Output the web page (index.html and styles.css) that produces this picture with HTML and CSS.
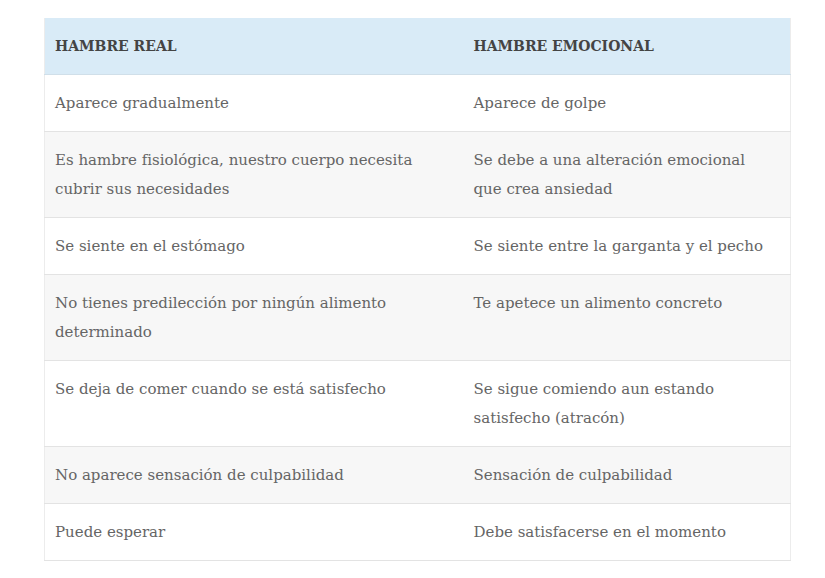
FILE: index.html
```html
<!DOCTYPE html>
<html lang="es">
<head>
<meta charset="utf-8">
<title>Hambre real vs hambre emocional</title>
<link rel="stylesheet" href="styles.css">
</head>
<body>
<table class="compare">
  <colgroup>
    <col class="col-a">
    <col class="col-b">
  </colgroup>
  <thead>
    <tr><th>HAMBRE REAL</th><th>HAMBRE EMOCIONAL</th></tr>
  </thead>
  <tbody>
    <tr><td>Aparece gradualmente</td><td>Aparece de golpe</td></tr>
    <tr><td>Es hambre fisiológica, nuestro cuerpo necesita cubrir sus necesidades</td><td>Se debe a una alteración emocional que crea ansiedad</td></tr>
    <tr><td>Se siente en el estómago</td><td>Se siente entre la garganta y el pecho</td></tr>
    <tr><td>No tienes predilección por ningún alimento determinado</td><td>Te apetece un alimento concreto</td></tr>
    <tr><td>Se deja de comer cuando se está satisfecho</td><td>Se sigue comiendo aun estando satisfecho (atracón)</td></tr>
    <tr><td>No aparece sensación de culpabilidad</td><td>Sensación de culpabilidad</td></tr>
    <tr><td>Puede esperar</td><td>Debe satisfacerse en el momento</td></tr>
  </tbody>
</table>
</body>
</html>
```
FILE: styles.css
```css
html, body {
  margin: 0;
  padding: 0;
  background: #ffffff;
}
body {
  padding: 18px 0 0 44px;
  font-family: "DejaVu Serif", "Liberation Serif", serif;
}
.compare {
  border-collapse: collapse;
  table-layout: fixed;
  width: 746px;
  border-left: 1px solid #ececec;
  border-right: 1px solid #ececec;
}
.col-a { width: 419px; }
.col-b { width: 327px; }
.compare th,
.compare td {
  text-align: left;
  vertical-align: top;
  padding: 14px 18px 13px 10px;
  line-height: 29px;
}
.compare th {
  background: #d9ebf7;
  color: #444444;
  font-size: 14px;
  font-weight: bold;
  border-bottom: 1px solid #d0dfe9;
  padding: 14px 18px 13px 10px;
}
.compare td {
  color: #656565;
  font-size: 15px;
  border-bottom: 1px solid #e3e3e3;
}
.compare tbody tr:nth-child(even) td {
  background: #f7f7f7;
}
```
